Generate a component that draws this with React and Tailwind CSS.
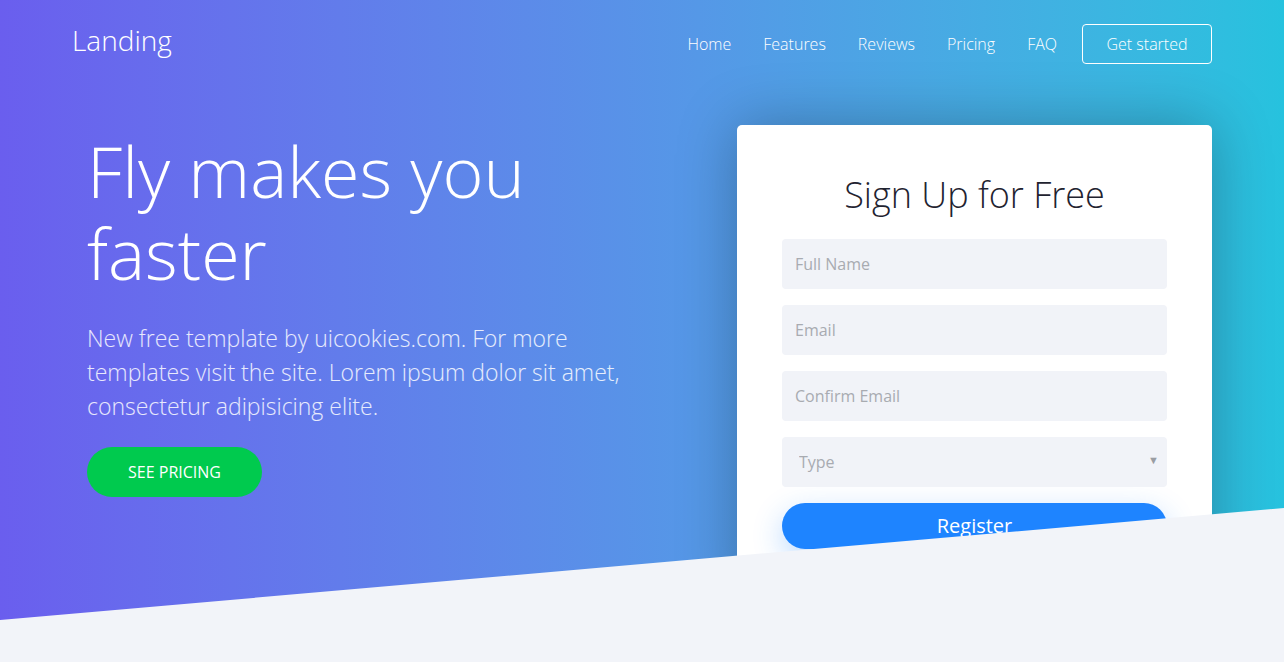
import React from 'react';

const navLinks = ['Home', 'Features', 'Reviews', 'Pricing', 'FAQ'];

const Field = ({ placeholder }) => (
  <input
    type="text"
    placeholder={placeholder}
    className="h-[50px] w-full rounded-[4px] bg-[#f1f3f8] px-[13px] text-[16px] text-gray-700 outline-none placeholder:text-[#a8abb1]"
  />
);

export default function App() {
  return (
    <div className="min-h-screen bg-[#f2f4f9] font-['Open_Sans',sans-serif]">
      <section className="relative h-[662px] overflow-hidden bg-gradient-to-r from-[#6a5eee] to-[#26c2de]">
        <nav className="mx-auto flex w-[1140px] items-center justify-between pt-[24px]">
          <a href="#" className="-mt-[8px] text-[28px] font-light text-white">Landing</a>
          <div className="flex items-center">
            {navLinks.map((link) => (
              <a key={link} href="#" className="px-[16px] text-[16px] font-light text-white">
                {link}
              </a>
            ))}
            <a
              href="#"
              className="ml-[9px] flex h-[40px] w-[130px] items-center justify-center rounded-[4px] border border-white text-[16px] font-light text-white"
            >
              Get started
            </a>
          </div>
        </nav>

        <div className="mx-auto flex w-[1140px] justify-between">
          <div className="w-[570px] px-[15px] pt-[66px]">
            <h1 className="text-[70px] font-light leading-[82px] text-white">
              Fly makes you faster
            </h1>
            <p className="mt-[27px] text-[23px] font-light leading-[34px] text-white/85">
              New free template by uicookies.com. For more templates visit the site. Lorem ipsum dolor sit amet, consectetur adipisicing elite.
            </p>
            <a
              href="#"
              className="mt-[24px] flex h-[50px] w-[175px] items-center justify-center rounded-full bg-[#00ca4e] text-[16px] text-white"
            >
              SEE PRICING
            </a>
          </div>

          <div className="mt-[61px] h-[480px] w-[475px] rounded-[5px] bg-white px-[45px] pt-[43px] shadow-[0_0_60px_rgba(0,0,0,0.28)]">
            <h2 className="text-center text-[36px] font-light text-[#1f2330]">Sign Up for Free</h2>
            <form className="mt-[17px] flex flex-col gap-[16px]">
              <Field placeholder="Full Name" />
              <Field placeholder="Email" />
              <Field placeholder="Confirm Email" />
              <div className="relative">
                <select className="h-[50px] w-full appearance-none rounded-[4px] bg-[#f1f3f8] px-[17px] text-[16px] text-[#a8abb1] outline-none">
                  <option>Type</option>
                </select>
                <span className="pointer-events-none absolute right-[8px] top-[15px] text-[11px] text-[#9a9da3]">▼</span>
              </div>
              <button
                type="button"
                className="h-[46px] w-full rounded-full bg-[#1e84ff] text-[20px] text-white shadow-[0_10px_30px_rgba(30,132,255,0.3)]"
              >
                Register
              </button>
            </form>
          </div>
        </div>

        <svg
          className="absolute bottom-0 left-0 h-[154px] w-full"
          viewBox="0 0 1284 154"
          preserveAspectRatio="none"
        >
          <polygon points="0,112 1284,0 1284,154 0,154" fill="#f2f4f9" />
        </svg>
      </section>
    </div>
  );
}
